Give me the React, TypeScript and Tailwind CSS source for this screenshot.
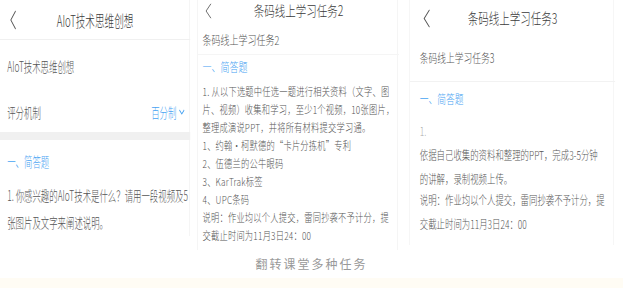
import type { ReactNode } from 'react'

const font = { fontFamily: '"Noto Sans CJK SC", "Noto Sans", sans-serif' }

function Back({ className }: { className?: string }) {
  return (
    <svg viewBox="0 0 12 20" className={className} fill="none">
      <polyline points="10,1 2,10 10,19" stroke="#555" strokeWidth="1.2" />
    </svg>
  )
}

function Line({ children, className = '' }: { children: ReactNode; className?: string }) {
  return <div className={`whitespace-nowrap ${className}`}>{children}</div>
}

// screenshots in the reference are squeezed horizontally, so each phone
// is laid out at its natural width and scaled on the x axis
function PhoneOne() {
  return (
    <div className="w-[190px] h-[236px] shrink-0 border-r border-[#f5f5f5]">
      <div className="w-[317px] origin-top-left scale-x-60 font-light text-[#555]">
        <div className="h-10 grid grid-cols-[48px_1fr_48px] items-center border-b border-[#f0f0f0]">
          <Back className="w-[12px] h-[20px] ml-[16px]" />
          <div className="text-center text-[16px] text-[#3a3a3a]">AIoT技术思维创想</div>
          <div />
        </div>
        <div className="h-[52px] flex items-center px-3 text-[14px]">AIoT技术思维创想</div>
        <div className="h-[40px] flex items-center justify-between pl-3 pr-[9px] text-[14px]">
          <span>评分机制</span>
          <span className="flex items-center gap-1 text-[#46a2f2]">
            百分制
            <svg viewBox="0 0 10 6" className="w-[10px] h-[6px]" fill="none">
              <polyline points="1,1 5,5 9,1" stroke="#46a2f2" strokeWidth="1.2" />
            </svg>
          </span>
        </div>
        <div className="h-[8px] bg-[#f0f0f0]" />
        <div className="h-[42px] flex items-center px-3 text-[14px] text-[#46a2f2]">一、简答题</div>
        <div className="px-3 text-[14px] leading-[27px]">
          <Line>1. 你感兴趣的AIoT技术是什么？请用一段视频及5</Line>
          <Line>张图片及文字来阐述说明。</Line>
        </div>
      </div>
    </div>
  )
}

function PhoneTwo() {
  return (
    <div className="w-[201px] h-[250px] shrink-0 ml-[7px] border-x border-[#f5f5f5]">
      <div className="w-[268px] origin-top-left scale-x-75 font-light text-[#555]">
        <div className="h-[18px] grid grid-cols-[40px_1fr_40px] items-center">
          <Back className="w-[12px] h-[16px] ml-[8px]" />
          <div className="text-center text-[14px] text-[#3a3a3a]">条码线上学习任务2</div>
          <div />
        </div>
        <div className="mt-[8px] h-[29px] flex items-center px-[6px] text-[12px] border-b border-[#f5f5f5]">
          条码线上学习任务2
        </div>
        <div className="h-[24px] flex items-center px-[6px] text-[12px] text-[#46a2f2]">一、简答题</div>
        <div className="mt-[3px] px-[6px] text-[11px] leading-[18px] tracking-[0.3px]">
          <Line>1. 从以下选题中任选一题进行相关资料（文字、图</Line>
          <Line>片、视频）收集和学习，至少1个视频，10张图片，</Line>
          <Line>整理成演说PPT，并将所有材料提交学习通。</Line>
          <Line>1、约翰·柯默德的“卡片分拣机”专利</Line>
          <Line>2、伍德兰的公牛眼码</Line>
          <Line>3、KarTrak标签</Line>
          <Line>4、UPC条码</Line>
          <Line>说明：作业均以个人提交，雷同抄袭不予计分，提</Line>
          <Line>交截止时间为11月3日24：00</Line>
        </div>
      </div>
    </div>
  )
}

function PhoneThree() {
  return (
    <div className="w-[205px] h-[245px] shrink-0 ml-[11px] border-x border-[#f6f6f6]">
      <div className="w-[293px] origin-top-left scale-x-70 font-light text-[#555]">
        <div className="h-[36px] grid grid-cols-[48px_1fr_48px] items-center">
          <Back className="w-[12px] h-[19px] ml-[18px]" />
          <div className="text-center text-[15px] text-[#3a3a3a]">条码线上学习任务3</div>
          <div />
        </div>
        <div className="h-[46px] flex items-center px-[14px] text-[12.5px] border-b border-[#f2f2f2]">
          条码线上学习任务3
        </div>
        <div className="h-[34px] flex items-center px-[14px] text-[12.5px] text-[#46a2f2]">一、简答题</div>
        <div className="mt-[3px] px-[14px] text-[12px] leading-[24px]">
          <Line className="text-[#aaa]">1.</Line>
          <Line>依据自己收集的资料和整理的PPT，完成3-5分钟</Line>
          <Line>的讲解，录制视频上传。</Line>
          <div className="-mt-[3px]">
            <Line>说明：作业均以个人提交，雷同抄袭不予计分，提</Line>
            <Line>交截止时间为11月3日24：00</Line>
          </div>
        </div>
      </div>
    </div>
  )
}

export default function App() {
  return (
    <div className="w-[623px] h-[288px] bg-white flex flex-col overflow-hidden" style={font}>
      <div className="h-[250px] flex items-start overflow-hidden">
        <PhoneOne />
        <PhoneTwo />
        <PhoneThree />
      </div>
      <div className="h-[28px] flex items-center justify-center text-[12px] tracking-[2px] text-[#999]">
        翻转课堂多种任务
      </div>
      <div className="h-[10px] bg-[#fffcf4]" />
    </div>
  )
}
